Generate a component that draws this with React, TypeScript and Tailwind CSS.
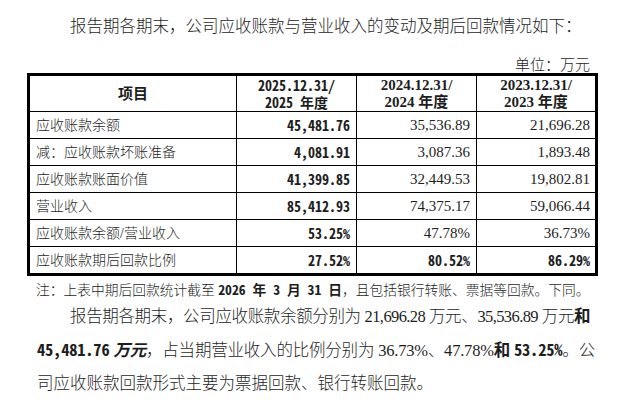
import React from "react";

// Receivables vs. revenue table excerpt from a prospectus page.

const SERIF = { fontFamily: '"Liberation Serif", "Noto Sans CJK SC", serif' };
const MONO_BOLD = "font-['Noto_Sans_Mono_CJK_SC','Liberation_Sans_Narrow','Liberation_Sans',sans-serif] font-bold";

type Row = { label: string; a: string; b: string; c: string; boldAll?: boolean };

const ROWS: Row[] = [
  { label: "应收账款余额", a: "45,481.76", b: "35,536.89", c: "21,696.28" },
  { label: "减：应收账款坏账准备", a: "4,081.91", b: "3,087.36", c: "1,893.48" },
  { label: "应收账款账面价值", a: "41,399.85", b: "32,449.53", c: "19,802.81" },
  { label: "营业收入", a: "85,412.93", b: "74,375.17", c: "59,066.44" },
  { label: "应收账款余额/营业收入", a: "53.25%", b: "47.78%", c: "36.73%" },
  { label: "应收账款期后回款比例", a: "27.52%", b: "80.52%", c: "86.29%", boldAll: true },
];

function Num({ v, bold }: { v: string; bold?: boolean }) {
  if (bold) return <span className={`${MONO_BOLD} text-[14px]`}>{v}</span>;
  return <span className="text-[15px]">{v}</span>;
}

export default function App() {
  return (
    <div className="w-[627px] h-[408px] bg-white text-[#1e1e1e] overflow-hidden" style={SERIF}>
      <p className="pl-[70px] pt-[14px] text-[16.5px] leading-[26px] font-light">
        报告期各期末，公司应收账款与营业收入的变动及期后回款情况如下：
      </p>
      <div className="pt-[18px] pr-[37px] text-right text-[15px] leading-[15px] font-light">
        单位：万元
      </div>

      <div className="ml-[27px] w-[571px] border-[3px] border-black">
        <div className="grid grid-cols-[207px_120px_120px_1fr] h-[36px] border-b border-black">
          <div className="flex items-center justify-center border-r border-black font-['Noto_Sans_CJK_SC',sans-serif] font-bold text-[15px]">
            项目
          </div>
          <div className="flex flex-col items-center justify-center border-r border-black text-[14px] leading-[17px]">
            <span className={`${MONO_BOLD} block h-[17px]`}>2025.12.31/</span>
            <span className={`${MONO_BOLD} block h-[17px]`}>2025 年度</span>
          </div>
          <div className="flex flex-col items-center justify-center border-r border-black font-bold text-[15px] leading-[17px]">
            <span>2024.12.31/</span>
            <span>2024 年度</span>
          </div>
          <div className="flex flex-col items-center justify-center font-bold text-[15px] leading-[17px]">
            <span>2023.12.31/</span>
            <span>2023 年度</span>
          </div>
        </div>
        {ROWS.map((r, i) => (
          <div
            key={r.label}
            className={`grid grid-cols-[207px_120px_120px_1fr] ${i < ROWS.length - 1 ? "h-[27px] border-b border-black" : "h-[26px]"}`}
          >
            <div className="flex items-center pl-[6px] border-r border-black text-[14px] font-light">{r.label}</div>
            <div className="flex items-center justify-end pr-[6px] border-r border-black">
              <Num v={r.a} bold />
            </div>
            <div className="flex items-center justify-end pr-[6px] border-r border-black">
              <Num v={r.b} bold={r.boldAll} />
            </div>
            <div className="flex items-center justify-end pr-[5px]">
              <Num v={r.c} bold={r.boldAll} />
            </div>
          </div>
        ))}
      </div>

      <p className="pl-[36px] mt-[4px] text-[13.75px] leading-[18px] font-light whitespace-nowrap">
        注：上表中期后回款统计截至 <b className={MONO_BOLD}>2026 年 3 月 31 日</b>，且包括银行转账、票据等回款。下同。
      </p>

      <div className="pl-[37px] pr-[37px] text-[16.5px] leading-[33px] font-light">
        <div className="pl-[33px] whitespace-nowrap tracking-[-0.6px] text-justify [text-align-last:justify]">
          报告期各期末，公司应收账款余额分别为 21,696.28 万元、35,536.89 万元<b className="font-bold">和</b>
        </div>
        <div className="whitespace-nowrap tracking-[-0.2px] text-justify [text-align-last:justify]">
          <b className={MONO_BOLD}>45,481.76</b>{" "}
          <b className="font-['Noto_Sans_CJK_SC',sans-serif] font-bold italic">万元</b>，占当期营业收入的比例分别为 36.73%、47.78%
          <b className="font-bold">和</b> <b className={MONO_BOLD}>53.25%</b>。公
        </div>
        <div className="whitespace-nowrap">司应收账款回款形式主要为票据回款、银行转账回款。</div>
      </div>
    </div>
  );
}
